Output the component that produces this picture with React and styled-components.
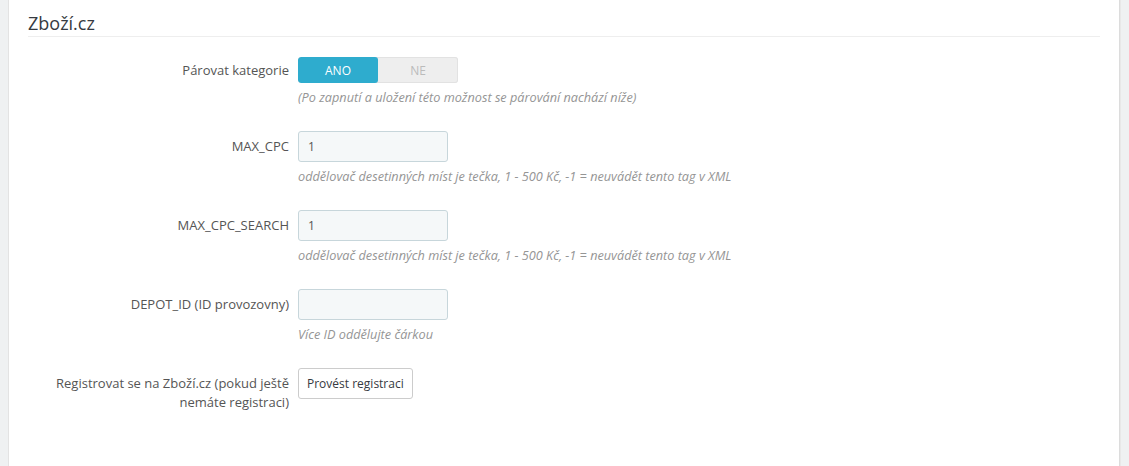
import styled, { createGlobalStyle } from 'styled-components';

const GlobalStyle = createGlobalStyle`
  html, body {
    margin: 0;
    padding: 0;
    background: #eff1f2;
  }
  body {
    font-family: "Open Sans", "Liberation Sans", sans-serif;
    font-size: 12px;
    color: #555;
  }
`;

const rows = [
  { label: 'MAX_CPC', value: '1', help: 'oddělovač desetinných míst je tečka, 1 - 500 Kč, -1 = neuvádět tento tag v XML' },
  { label: 'MAX_CPC_SEARCH', value: '1', help: 'oddělovač desetinných míst je tečka, 1 - 500 Kč, -1 = neuvádět tento tag v XML' },
  { label: 'DEPOT_ID (ID provozovny)', value: '', help: 'Více ID oddělujte čárkou' }
];

const App = () => {
  return (
    <Page>
      <GlobalStyle />
      <Panel>
        <Heading>Zboží.cz</Heading>
        <Form>
          <Row>
            <Label lineHeight="26px">Párovat kategorie</Label>
            <Control>
              <Switch>
                <SwitchOption active>ANO</SwitchOption>
                <SwitchOption>NE</SwitchOption>
              </Switch>
              <Help>(Po zapnutí a uložení této možnost se párování nachází níže)</Help>
            </Control>
          </Row>
          { rows.map((row) =>
            <Row key={ row.label }>
              <Label>{ row.label }</Label>
              <Control>
                <Input type="text" defaultValue={ row.value } />
                <Help>{ row.help }</Help>
              </Control>
            </Row>
          ) }
          <Row>
            <Label multiline>
              Registrovat se na Zboží.cz (pokud ještě nemáte registraci)
            </Label>
            <Control>
              <Button type="button">Provést registraci</Button>
            </Control>
          </Row>
        </Form>
      </Panel>
    </Page>
  );
};

const Page = styled.div`
  min-height: 466px;
  padding: 0 9px 0 8px;
  box-sizing: border-box;
`;

const Panel = styled.div`
  background: #fff;
  border: 1px solid #e3e3e3;
  border-top: none;
  border-bottom: none;
  border-right-color: #dcdcdc;
  box-shadow: 1px 0 0 #e8e8e8;
  min-height: 466px;
  padding: 10px 19px 0 19px;
  box-sizing: border-box;
`;

const Heading = styled.h3`
  margin: 0;
  font-size: 18px;
  font-weight: 400;
  color: #363a41;
  line-height: 26px;
  height: 26px;
  border-bottom: 1px solid #eee;
`;

const Form = styled.div`
  padding-top: 20px;
`;

const Row = styled.div`
  display: grid;
  grid-template-columns: 261px 1fr;
  column-gap: 9px;
  margin-bottom: 25px;
`;

const Label = styled.label`
  text-align: right;
  color: #555;
  font-size: 13px;
  line-height: ${ (p) => p.multiline ? '19px' : (p.lineHeight || '31px') };
  padding-top: ${ (p) => p.multiline ? '6px' : '0' };
  padding-left: ${ (p) => p.multiline ? '20px' : '0' };
`;

const Control = styled.div`
  display: flex;
  flex-direction: column;
  align-items: flex-start;
`;

const Switch = styled.div`
  display: flex;
  width: 160px;
  height: 26px;
  border-radius: 3px;
  background: #eee;
  box-shadow: inset 0 0 0 1px #e2e2e2;
  overflow: hidden;
`;

const SwitchOption = styled.span`
  flex: 1;
  display: flex;
  align-items: center;
  justify-content: center;
  font-size: 12px;
  color: ${ (p) => p.active ? '#fff' : '#bbb' };
  background: ${ (p) => p.active ? '#2eacce' : 'transparent' };
  border-radius: 3px;
`;

const Input = styled.input`
  width: 150px;
  height: 31px;
  box-sizing: border-box;
  padding: 0 9px;
  background: #f5f8f9;
  border: 1px solid #c7d6db;
  border-radius: 3px;
  font-family: "Open Sans", "Liberation Sans", sans-serif;
  font-size: 12px;
  color: #555;
  outline: none;
`;

const Help = styled.p`
  margin: 6px 0 0;
  font-size: 12.7px;
  line-height: 17px;
  font-style: italic;
  color: #959595;
  white-space: nowrap;
`;

const Button = styled.button`
  height: 31px;
  padding: 0 8px;
  background: #fff;
  border: 1px solid #ccc;
  border-radius: 3px;
  font-family: "Open Sans", "Liberation Sans", sans-serif;
  font-size: 12px;
  color: #363a41;
  cursor: pointer;
`;

export default App;
